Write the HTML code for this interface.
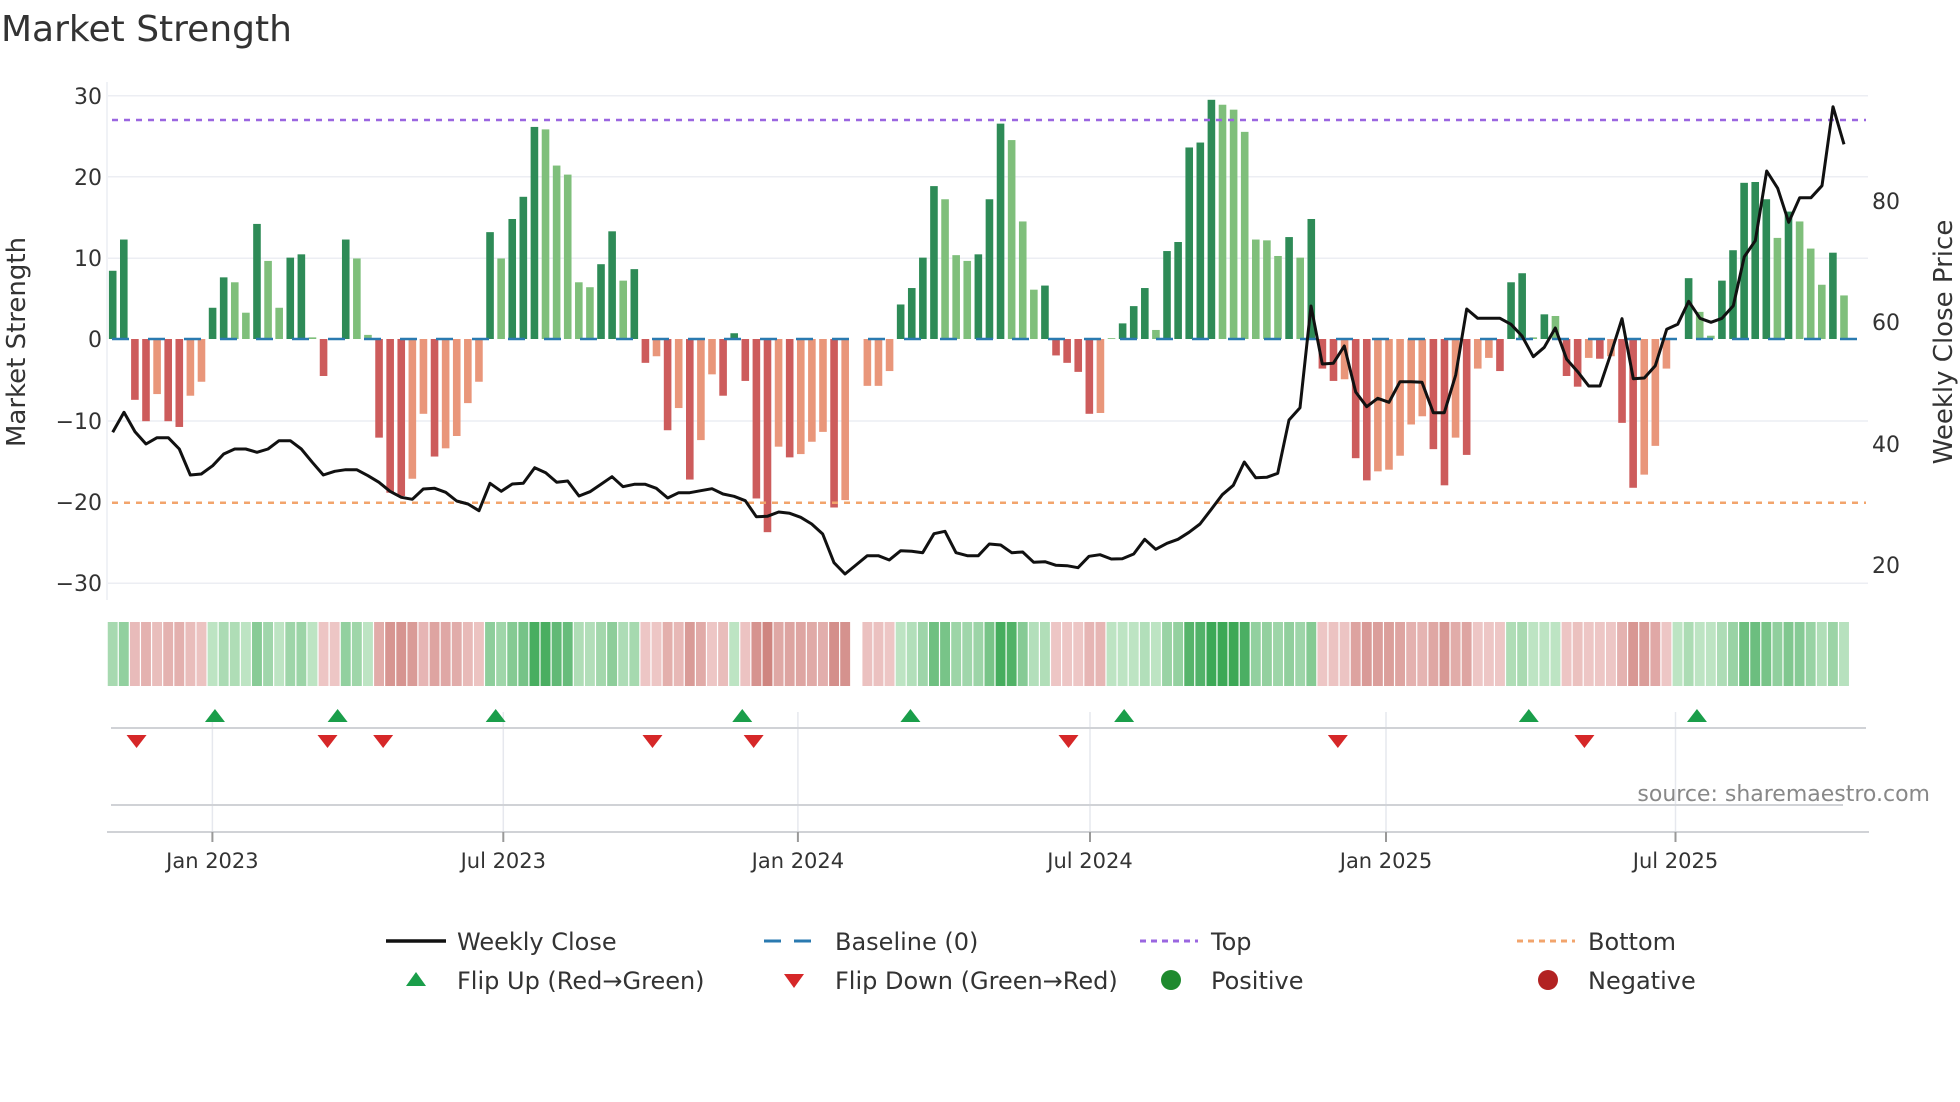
<!DOCTYPE html>
<html><head><meta charset="utf-8"><style>
html,body{margin:0;padding:0;background:#fff;}
svg{display:block;font-family:"DejaVu Sans","Liberation Sans",sans-serif;}
</style></head><body>
<svg id="s" width="1960" height="1102" viewBox="0 0 1960 1102" xmlns="http://www.w3.org/2000/svg">
<text x="1" y="41" font-size="36" fill="#333">Market Strength</text>
<g stroke="#eceef3" stroke-width="1.5">
<line x1="108" y1="95.7" x2="1868" y2="95.7"/>
<line x1="108" y1="176.7" x2="1868" y2="176.7"/>
<line x1="108" y1="258.3" x2="1868" y2="258.3"/>
<line x1="108" y1="421" x2="1868" y2="421"/>
<line x1="108" y1="583.3" x2="1868" y2="583.3"/>
<line x1="107" y1="82" x2="107" y2="600"/>
</g>
<g font-size="22" fill="#333" text-anchor="end">
<text x="102" y="104">30</text><text x="102" y="185">20</text><text x="102" y="266">10</text>
<text x="102" y="347">0</text><text x="102" y="429">−10</text><text x="102" y="510">−20</text><text x="102" y="591">−30</text>
</g>
<g font-size="22" fill="#333">
<text x="1872" y="209">80</text><text x="1872" y="330">60</text><text x="1872" y="452">40</text><text x="1872" y="573">20</text>
</g>
<text transform="translate(25,342) rotate(-90)" font-size="26" fill="#333" text-anchor="middle">Market Strength</text>
<text transform="translate(1952,342) rotate(-90)" font-size="26" fill="#333" text-anchor="middle">Weekly Close Price</text>
<g id="bars"></g>
<line x1="112" y1="339" x2="1866" y2="339" stroke="#2a7ab0" stroke-width="2.5" stroke-dasharray="17 19"/>
<line x1="112" y1="120" x2="1866" y2="120" stroke="#9a66e0" stroke-width="2.5" stroke-dasharray="6 6"/>
<line x1="112" y1="502.7" x2="1866" y2="502.7" stroke="#f2a46c" stroke-width="2.5" stroke-dasharray="6 6"/>
<polyline id="price" fill="none" stroke="#111" stroke-width="3" stroke-linejoin="round"/>
<g id="heat"></g>
<g stroke="#e6e8ee" stroke-width="1.5">
<line x1="212.4" y1="712" x2="212.4" y2="832"/><line x1="503.3" y1="712" x2="503.3" y2="832"/>
<line x1="797.9" y1="712" x2="797.9" y2="832"/><line x1="1090" y1="712" x2="1090" y2="832"/>
<line x1="1386" y1="712" x2="1386" y2="832"/><line x1="1675.5" y1="712" x2="1675.5" y2="832"/>
</g>
<g stroke="#d0d2d6" stroke-width="2">
<line x1="111" y1="728" x2="1866" y2="728"/>
<line x1="111" y1="805" x2="1843" y2="805"/>
<line x1="107" y1="832" x2="1869" y2="832"/>
</g>
<g stroke="#999" stroke-width="2">
<line x1="212.4" y1="832" x2="212.4" y2="842"/><line x1="503.3" y1="832" x2="503.3" y2="842"/>
<line x1="797.9" y1="832" x2="797.9" y2="842"/><line x1="1090" y1="832" x2="1090" y2="842"/>
<line x1="1386" y1="832" x2="1386" y2="842"/><line x1="1675.5" y1="832" x2="1675.5" y2="842"/>
</g>
<g id="marks"></g>
<text x="1930" y="801" font-size="22" fill="#888" text-anchor="end">source: sharemaestro.com</text>
<g font-size="21" fill="#333" text-anchor="middle">
<text x="212.4" y="868">Jan 2023</text><text x="503.3" y="868">Jul 2023</text>
<text x="797.9" y="868">Jan 2024</text><text x="1090" y="868">Jul 2024</text>
<text x="1386" y="868">Jan 2025</text><text x="1675.5" y="868">Jul 2025</text>
</g>
<g font-size="24" fill="#333">
<line x1="386" y1="941" x2="446" y2="941" stroke="#111" stroke-width="3.5"/>
<text x="457" y="950">Weekly Close</text>
<line x1="764" y1="941" x2="822" y2="941" stroke="#2a7ab0" stroke-width="3" stroke-dasharray="17 13"/>
<text x="835" y="950">Baseline (0)</text>
<line x1="1140" y1="941" x2="1198" y2="941" stroke="#9a66e0" stroke-width="3" stroke-dasharray="6 5"/>
<text x="1211" y="950">Top</text>
<line x1="1517" y1="941" x2="1575" y2="941" stroke="#f2a46c" stroke-width="3" stroke-dasharray="6 5"/>
<text x="1588" y="950">Bottom</text>
<polygon points="406,986 426,986 416,972" fill="#1a9e4a"/>
<text x="457" y="989">Flip Up (Red→Green)</text>
<polygon points="784,974 804,974 794,988" fill="#d62728"/>
<text x="835" y="989">Flip Down (Green→Red)</text>
<circle cx="1171" cy="980" r="10" fill="#1e8a2e"/>
<text x="1211" y="989">Positive</text>
<circle cx="1548" cy="980" r="10" fill="#b22222"/>
<text x="1588" y="989">Negative</text>
</g>
</svg>
<script>
var NS="http://www.w3.org/2000/svg";
function el(t,a,p){var e=document.createElementNS(NS,t);for(var k in a)e.setAttribute(k,a[k]);p.appendChild(e);return e;}
var B=[[8.3,1],[12.1,1],[-7.4,1],[-10,1],[-6.7,0],[-10,1],[-10.7,1],[-6.9,0],[-5.2,0],[3.8,1],[7.5,1],[6.9,0],[3.2,0],[14,1],[9.5,0],[3.8,0],[9.9,1],[10.3,1],[0.2,0],[-4.5,1],[-0.01,1],[12.1,1],[9.8,0],[0.5,0],[-12,1],[-18.7,1],[-19.1,1],[-17,0],[-9.1,0],[-14.3,1],[-13.3,0],[-11.8,0],[-7.8,0],[-5.2,0],[13,1],[9.8,0],[14.6,1],[17.3,1],[25.8,1],[25.5,0],[21.1,0],
[20,0],[6.9,0],[6.3,0],[9.1,1],[13.1,1],[7.1,0],[8.5,1],[-2.9,1],[-2.1,0],[-11.1,1],[-8.4,0],[-17.1,1],[-12.3,0],[-4.3,0],[-6.9,1],[0.7,1],[-5.1,1],[-19.4,1],[-23.5,1],[-13.1,0],[-14.4,1],[-14,0],[-12.5,0],[-11.3,0],[-20.5,1],[-19.6,0],[0,0],[-5.7,0],[-5.7,0],[-3.9,0],[4.2,1],[6.2,1],[9.9,1],[18.6,1],[17,0],[10.2,0],[9.5,0],[10.3,1],[17,1],
[26.2,1],[24.2,0],[14.3,0],[6,0],[6.5,1],[-2,1],[-2.9,1],[-4,1],[-9.1,1],[-9,0],[0.1,0],[1.9,1],[4,1],[6.2,1],[1.1,0],[10.7,1],[11.8,1],[23.3,1],[23.9,1],[29.1,1],[28.5,0],[27.9,0],[25.2,0],[12.1,0],[12,0],[10.1,0],[12.4,1],[9.9,0],[14.6,1],[-3.6,1],[-5.1,1],[-4.9,0],[-14.5,1],[-17.2,1],[-16.1,0],[-15.9,0],[-14.2,0],[-10.4,0],[-9.4,0],[-13.4,1],
[-17.8,1],[-12,0],[-14.1,1],[-3.6,0],[-2.3,0],[-3.9,1],[6.9,1],[8,1],[0.2,0],[3,1],[2.8,0],[-4.5,1],[-5.8,1],[-2.3,0],[-2.4,1],[-2.1,0],[-10.2,1],[-18.1,1],[-16.5,0],[-13,0],[-3.6,0],[0.01,0],[7.4,1],[3.3,0],[0.4,0],[7.1,1],[10.8,1],[19,1],[19.1,1],[17,1],[12.3,0],[15.5,1],[14.3,0],[11,0],[6.6,0],[10.5,1],[5.3,0]];
var n=B.length,x0=112.7,x1=1844,P=(x1-x0)/(n-1);
var gb=document.getElementById('bars'),gh=document.getElementById('heat');
function mix(a,b,t){return 'rgb('+[0,1,2].map(function(i){return Math.round(a[i]+(b[i]-a[i])*t)}).join(',')+')';}
for(var i=0;i<n;i++){var v=B[i][0],d=B[i][1],x=x0+i*P;
 var col=v>=0?(d?'#2e8b57':'#7fbf7b'):(d?'#cd5c5c':'#e9967a');
 var h=Math.abs(v)*8.22; if(h>0.3) el('rect',{x:x-3.8,y:v>=0?339-h:339,width:7.6,height:h,fill:col},gb);
 var t=Math.max(0.15,Math.min(Math.abs(v)/28,1));
 var c=v===0?'#ffffff':(v>0?mix([212,238,214],[60,168,86],t):mix([244,212,212],[200,118,112],t));
 el('rect',{x:x-P/2+0.6,y:622,width:P-1.2,height:64,fill:c},gh);
}
var L=[[100,[[38,1027],[72,967],[105,1025],[138,1062],[171,1043],[205,1043],[238,1077],[271,1155],[304,1152],[338,1127],[371,1092],[404,1077],[437,1077],[471,1087],[504,1077],[537,1052],[571,1052],[604,1077],[637,1117],[670,1155],[704,1144],[737,1139],[770,1139],[804,1157],[837,1177],[870,1204],[904,1222],[937,1228],[970,1197],[1004,1195],[1037,1207],[1070,1233],[1104,1242],[1137,1262],[1170,1180],[1204,1204],[1237,1182],[1270,1180],[1304,1133],[1337,1148],[1370,1177]]],
[540,[[83,1173],[117,1218],[150,1205],[183,1183],[216,1160],[249,1190],[283,1183],[316,1183],[349,1195],[383,1224],[416,1208],[449,1208],[482,1202],[516,1196],[549,1212],[582,1219],[616,1232],[649,1280],[682,1279],[716,1266],[749,1270],[782,1282],[815,1302],[848,1332],[882,1418],[915,1452],[948,1425],[982,1397],[1015,1397],[1048,1410],[1082,1382],[1115,1384],[1148,1388],[1182,1331],[1215,1324],[1248,1388],[1282,1397],[1315,1397],[1348,1362]]],
[980,[[62,1365],[95,1388],[128,1386],[161,1417],[195,1415],[228,1426],[261,1427],[294,1433],[327,1399],[360,1394],[394,1407],[427,1406],[461,1392],[494,1348],[527,1378],[561,1360],[594,1348],[627,1327],[660,1302],[694,1258],[727,1214],[760,1186],[793,1116],[827,1163],[860,1162],[893,1150],[927,990],[960,953],[993,648],[1027,822],[1060,820],[1093,768],[1127,906],[1160,950],[1193,925],[1227,937],[1260,875],[1293,875],[1326,877],[1360,968]]],
[1420,[[73,968],[107,855],[140,657],[173,685],[207,685],[240,685],[273,703],[306,738],[340,800],[373,772],[406,714],[440,808],[473,845],[506,888],[540,888],[573,790],[606,686],[640,866],[673,864],[706,827],[740,718],[773,703],[806,634],[840,685],[873,697],[906,685],[940,647],[973,500],[1006,452],[1040,243],[1073,295],[1106,397],[1139,323],[1173,323],[1206,287],[1239,50],[1272,163]]]];
var pts=[];L.forEach(function(s){s[1].forEach(function(p){pts.push((s[0]+p[0]/3).toFixed(1)+','+(90+p[1]/3).toFixed(1));});});
document.getElementById('price').setAttribute('points',pts.join(' '));
var gm=document.getElementById('marks'),k=1.2645;
[170,267,392,587,720,889,1209,1342].forEach(function(d){var x=d*k;el('polygon',{points:(x-10)+',722 '+(x+10)+',722 '+x+',709',fill:'#1a9e4a'},gm);});
[108,259,303,516,596,845,1058,1253].forEach(function(d){var x=d*k;el('polygon',{points:(x-10)+',735 '+(x+10)+',735 '+x+',748',fill:'#d62728'},gm);});
</script>
</body></html>
